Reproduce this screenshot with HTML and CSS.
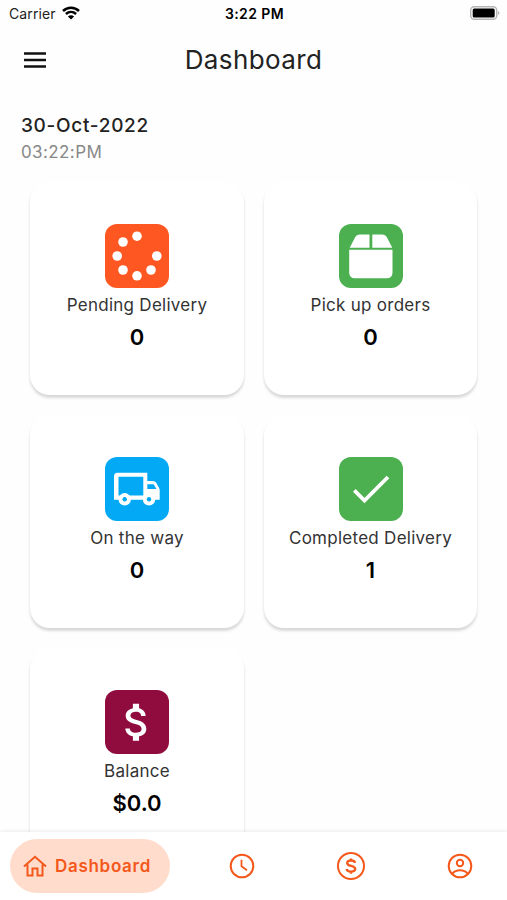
FILE: index.html
```html
<!DOCTYPE html>
<html lang="en">
<head>
    <meta charset="UTF-8">
    <meta name="viewport" content="width=device-width, initial-scale=1.0">
    <title>Dashboard</title>
    <link rel="stylesheet" href="styles.css">
</head>
<body>
    <div class="app">
        <div class="status-bar">
            <div class="carrier">
                <span>Carrier</span>
                <svg width="18" height="14" viewBox="0 0 18 14">
                    <path d="M1 5C5.500 .6 12.500 .6 17 5M3.900 8C7 5.200 11 5.200 14.100 8" fill="none" stroke="#000" stroke-width="2.500"/>
                    <path d="M9 13.500L5.900 10.400Q9 8 12.100 10.400z"/>
                </svg>
            </div>
            <div class="clock">3:22 PM</div>
            <svg class="battery" width="30" height="14" viewBox="0 0 30 14">
                <rect x=".7" y=".7" width="26" height="12.600" rx="3.500" fill="#fff" stroke="#b5b5b5" stroke-width="1.400"/>
                <rect x="2.700" y="2.500" width="22" height="9" rx="1.500"/>
                <path d="M28 5Q31 7 28 9z" fill="#b5b5b5"/>
            </svg>
        </div>

        <header class="header">
            <button class="menu-button" aria-label="Menu">
                <svg width="24" height="16" viewBox="0 0 24 16">
                    <path d="M1 1.500h22M1 8h22M1 14.500h22" stroke="#111" stroke-width="2.300"/>
                </svg>
            </button>
            <h1>Dashboard</h1>
        </header>

        <main class="content">
            <div class="date">30-Oct-2022</div>
            <div class="time">03:22:PM</div>

            <div class="cards">
                <div class="card">
                    <svg class="card-icon orange" viewBox="0 0 64 64">
                        <circle cx="32" cy="12.200" r="4.800"/>
                        <circle cx="18" cy="18" r="4.800"/>
                        <circle cx="12.200" cy="32" r="4.800"/>
                        <circle cx="18" cy="46" r="4.800"/>
                        <circle cx="32" cy="51.800" r="4.800"/>
                        <circle cx="46" cy="46" r="4.800"/>
                        <circle cx="51.800" cy="32" r="4.800"/>
                    </svg>
                    <div class="label">Pending Delivery</div>
                    <div class="value">0</div>
                </div>
                <div class="card">
                    <svg class="card-icon green" viewBox="0 0 64 64">
                        <path d="M30.500 10.500V23.700H10.700L16 13.500Q17.500 10.500 21 10.500zM33.300 10.500V23.700H53.300L48 13.500Q46.500 10.500 43 10.500z"/>
                        <path d="M10.200 25.800H53.500V48.500Q53.500 54.300 47.700 54.300H16Q10.200 54.300 10.200 48.500z"/>
                    </svg>
                    <div class="label">Pick up orders</div>
                    <div class="value">0</div>
                </div>
                <div class="card">
                    <svg class="card-icon blue" viewBox="0 0 64 64">
                        <path fill-rule="evenodd" d="M12.500 15.700H42.300V24H48Q50 24 51 25.600L54 30.800Q54.700 32 54.700 33.500V42.700H9V19.200Q9 15.700 12.500 15.700zM13.500 19.700V38.500H38.300V19.700zM42.300 27.200V32H51.500L48.600 27.200z"/>
                        <circle cx="19.700" cy="42.300" r="6.200"/>
                        <circle cx="44" cy="42.300" r="6.200"/>
                        <circle cx="19.700" cy="42.300" r="2.200" fill="#03a9f4"/>
                        <circle cx="44" cy="42.300" r="2.200" fill="#03a9f4"/>
                    </svg>
                    <div class="label">On the way</div>
                    <div class="value">0</div>
                </div>
                <div class="card">
                    <svg class="card-icon green" viewBox="0 0 64 64">
                        <path d="M15.300 33.300L25.500 43.500L49 20" fill="none" stroke="#fff" stroke-width="3.800"/>
                    </svg>
                    <div class="label">Completed Delivery</div>
                    <div class="value">1</div>
                </div>
                <div class="card">
                    <svg class="card-icon maroon" viewBox="0 0 64 64">
                        <path transform="translate(7.300 7.500) scale(2.060)" d="M11.800 10.900c-2.270-.59-3-1.200-3-2.150 0-1.090 1.010-1.850 2.700-1.850 1.780 0 2.440.85 2.500 2.100h2.210c-.07-1.720-1.120-3.300-3.210-3.810V3h-3v2.160c-1.940.42-3.500 1.680-3.500 3.610 0 2.310 1.910 3.460 4.700 4.130 2.500.6 3 1.480 3 2.410 0 .69-.49 1.790-2.700 1.790-2.060 0-2.870-.92-2.980-2.100h-2.200c.12 2.190 1.760 3.420 3.680 3.830V21h3v-2.150c1.950-.37 3.500-1.500 3.500-3.550 0-2.840-2.430-3.810-4.700-4.400z"/>
                    </svg>
                    <div class="label">Balance</div>
                    <div class="value">$0.0</div>
                </div>
            </div>
        </main>

        <nav class="bottom-nav">
            <a class="nav-item active">
                <svg width="24" height="24" viewBox="0 0 24 24">
                    <path d="M1 12.500L12 2.800L23 12.500M4.500 10.500V21.500H9.500V14.500H14.500V21.500H19.500V10.500"/>
                </svg>
                <span>Dashboard</span>
            </a>
            <a class="nav-item">
                <svg width="30" height="30" viewBox="0 0 30 30">
                    <circle cx="15" cy="15" r="11.300"/>
                    <path d="M14.500 8.700V15.300L20 19.200" stroke-width="1.800"/>
                </svg>
            </a>
            <a class="nav-item">
                <svg width="30" height="30" viewBox="0 0 30 30">
                    <circle cx="15" cy="15" r="13"/>
                    <path d="M19 11.800C18.600 8.700 11.200 8.500 11.200 12C11.200 16 19.200 13.800 19.200 18C19.200 21.700 11 21.500 10.800 18M15 7.500V10M15 20V22.700" stroke-width="2.400"/>
                </svg>
            </a>
            <a class="nav-item">
                <svg width="30" height="30" viewBox="0 0 30 30">
                    <circle cx="15" cy="15" r="11.300"/>
                    <circle cx="15" cy="12" r="3.200"/>
                    <path d="M7.500 22.500C11 18.300 19 18.300 22.500 22.500"/>
                </svg>
            </a>
        </nav>
    </div>
</body>
</html>
```
FILE: styles.css
```css
* {
    box-sizing: border-box;
}

body {
    font-family: Inter, sans-serif;
    background-color: #fefefe;
    margin: 0;
    padding: 0;
}

.app {
    display: flex;
    flex-direction: column;
    width: 507px;
    height: 900px;
    overflow: hidden;
}

.status-bar {
    display: grid;
    grid-template-columns: 1fr auto 1fr;
    align-items: center;
    height: 26px;
    padding: 0 7px 0 9px;
    font-size: 14px;
    flex-shrink: 0;
}

.carrier {
    display: flex;
    align-items: center;
    gap: 6px;
    color: #222;
    letter-spacing: 0.1px;
}

.clock {
    font-weight: 600;
    letter-spacing: 0.4px;
}

.battery {
    justify-self: end;
}

.header {
    display: grid;
    grid-template-columns: 48px 1fr 48px;
    align-items: center;
    height: 67px;
    padding: 0 11px;
    flex-shrink: 0;
}

.menu-button {
    display: flex;
    padding: 0 12px;
    background: none;
    border: none;
    cursor: pointer;
}

h1 {
    margin: 0;
    text-align: center;
    font-size: 26px;
    font-weight: 400;
    letter-spacing: 0.4px;
    color: #222;
}

.content {
    flex: 1;
    min-height: 0;
    padding: 19px 30px 0;
    overflow: hidden;
}

.date,
.time {
    margin-left: -9px;
}

.date {
    line-height: 27px;
    font-size: 19px;
    font-weight: 500;
    letter-spacing: 0.7px;
    color: #222;
}

.time {
    line-height: 26px;
    font-size: 17px;
    letter-spacing: 0.4px;
    color: #888;
}

.cards {
    display: grid;
    grid-template-columns: 214px 213px;
    grid-auto-rows: 213px;
    gap: 20px;
    margin-top: 17px;
}

.card {
    display: flex;
    flex-direction: column;
    align-items: center;
    padding-top: 42px;
    background-color: #fff;
    border-radius: 20px;
    box-shadow: 0 3px 3px rgba(0, 0, 0, 0.13), 0 2px 3px rgba(0, 0, 0, 0.03);
}

.card-icon {
    width: 64px;
    height: 64px;
    border-radius: 12px;
    fill: #fff;
}

.orange {
    background-color: #ff5722;
}

.green {
    background-color: #4caf50;
}

.blue {
    background-color: #03a9f4;
}

.maroon {
    background-color: #900c3f;
}

.label {
    margin-top: 4px;
    line-height: 26px;
    font-size: 17px;
    letter-spacing: 0.27px;
    color: #333;
    white-space: nowrap;
}

.value {
    margin-top: 4px;
    line-height: 30px;
    font-size: 22px;
    font-weight: 600;
    color: #000;
}

.bottom-nav {
    position: relative;
    display: flex;
    align-items: center;
    justify-content: space-between;
    height: 68px;
    padding: 0 32px 0 10px;
    background-color: #fff;
    box-shadow: 0 -1px 3px rgba(0, 0, 0, 0.08);
    flex-shrink: 0;
}

.nav-item {
    display: flex;
    align-items: center;
    color: #f4581b;
}

.nav-item svg {
    fill: none;
    stroke: currentColor;
    stroke-width: 2;
}

.nav-item.active {
    gap: 8px;
    width: 160px;
    height: 54px;
    padding-left: 13px;
    margin-right: -22px;
    border-radius: 27px;
    background-color: #ffdccc;
    font-size: 17px;
    font-weight: 600;
    letter-spacing: 0.7px;
}
```
